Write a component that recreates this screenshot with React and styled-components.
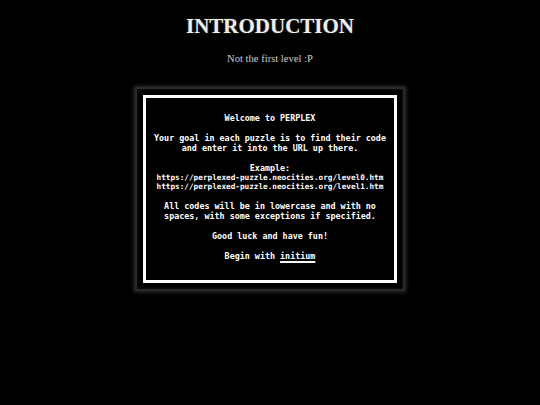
import React from "react";
import styled, { createGlobalStyle } from "styled-components";

const GlobalStyle = createGlobalStyle`
  html, body {
    margin: 0;
    padding: 0;
    background: #000;
  }
  body {
    font-family: "Liberation Serif", "Times New Roman", serif;
    color: #ddd;
  }
`;

const Page = styled.div`
  display: flex;
  flex-direction: column;
  align-items: center;
  min-height: 405px;
  padding-top: 13px;
  box-sizing: border-box;
`;

const Title = styled.h1`
  margin: 0;
  font-size: 21px;
  line-height: 26px;
  font-weight: bold;
  color: #eee;
  text-shadow: 0 0 2px rgba(255, 255, 255, 0.3);
`;

const Subtitle = styled.p`
  margin: 13px 0 0;
  font-size: 10.6px;
  line-height: 13px;
  color: #ccc;
`;

const Frame = styled.div`
  margin-top: 22px;
  width: 270px;
  height: 204px;
  box-sizing: border-box;
  padding: 6px;
  background: #000;
  border: 2px solid #2a2a2a;
  box-shadow: 0 0 4px 1px #303030, inset 0 0 3px #1e1e1e;
`;

const Panel = styled.div`
  height: 100%;
  box-sizing: border-box;
  border: 3px solid #fff;
  padding: 15px 2px;
  display: flex;
  flex-direction: column;
  gap: 10px;
  font-family: "DejaVu Sans Mono", "Liberation Mono", monospace;
  font-weight: bold;
  font-size: 8.4px;
  line-height: 10px;
  color: #fff;
  text-align: center;
`;

const Para = styled.p`
  margin: 0;
  white-space: pre-line;
`;

const Url = styled.span`
  display: block;
  font-size: 7.7px;
  line-height: 9px;
`;

const Link = styled.a`
  color: #fff;
  text-decoration: underline;
  text-decoration-thickness: 2px;
  text-underline-offset: 2px;
`;

export default function App() {
  return (
    <>
      <GlobalStyle />
      <Page>
        <Title>INTRODUCTION</Title>
        <Subtitle>Not the first level :P</Subtitle>
        <Frame>
          <Panel>
            <Para>Welcome to PERPLEX</Para>
            <Para>
              {"Your goal in each puzzle is to find their code\nand enter it into the URL up there."}
            </Para>
            <Para>
              Example:
              <Url>https://perplexed-puzzle.neocities.org/level0.htm</Url>
              <Url>https://perplexed-puzzle.neocities.org/level1.htm</Url>
            </Para>
            <Para>
              {"All codes will be in lowercase and with no\nspaces, with some exceptions if specified."}
            </Para>
            <Para>Good luck and have fun!</Para>
            <Para>
              Begin with <Link href="#">initium</Link>
            </Para>
          </Panel>
        </Frame>
      </Page>
    </>
  );
}
